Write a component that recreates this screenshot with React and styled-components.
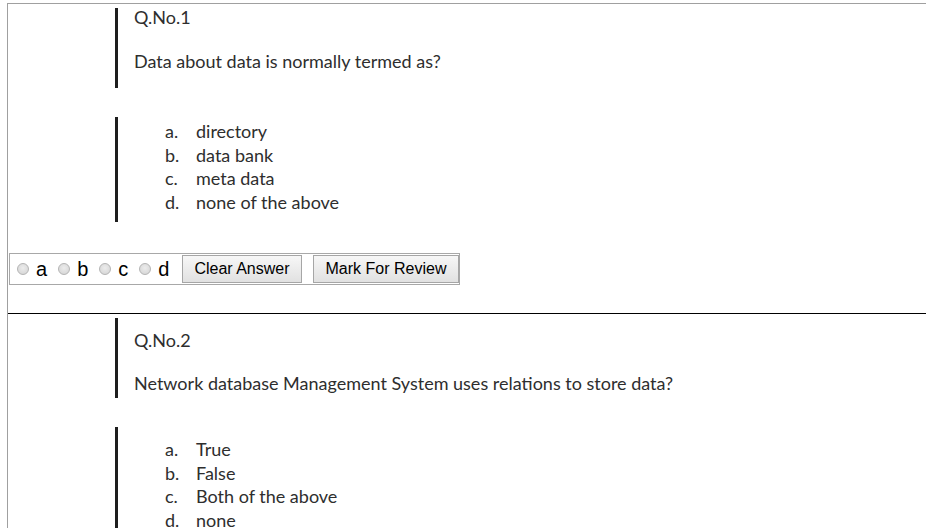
import React from "react";
import styled, { createGlobalStyle } from "styled-components";

const questions = [
  {
    no: 1,
    text: "Data about data is normally termed as?",
    options: ["directory", "data bank", "meta data", "none of the above"],
    stemTop: 0,
    textGap: 25,
    optionsTop: 3,
  },
  {
    no: 2,
    text: "Network database Management System uses relations to store data?",
    options: ["True", "False", "Both of the above", "none"],
    stemTop: 13,
    textGap: 24,
    optionsTop: 11,
  },
];

const letters = ["a", "b", "c", "d"];

export default function App() {
  return (
    <>
      <GlobalStyle />
      <Page>
        <Sheet>
          {questions.map((q, i) => (
            <QuestionBlock key={q.no} first={i === 0}>
              <Stem top={q.stemTop}>
                <QNo>Q.No.{q.no}</QNo>
                <QText gap={q.textGap}>{q.text}</QText>
              </Stem>
              <Options top={q.optionsTop}>
                {q.options.map((opt, j) => (
                  <OptionRow key={opt}>
                    <OptionLetter>{letters[j]}.</OptionLetter>
                    <span>{opt}</span>
                  </OptionRow>
                ))}
              </Options>
              <AnswerBar>
                {letters.map((l) => (
                  <Choice key={l}>
                    <Radio type="radio" name={`q${q.no}`} value={l} />
                    {l}
                  </Choice>
                ))}
                <ActionButton type="button" pad={11}>
                  Clear Answer
                </ActionButton>
                <ActionButton type="button" pad={12}>
                  Mark For Review
                </ActionButton>
              </AnswerBar>
            </QuestionBlock>
          ))}
        </Sheet>
      </Page>
    </>
  );
}

const GlobalStyle = createGlobalStyle`
  html, body {
    margin: 0;
    background: #ffffff;
    overflow: hidden;
  }
`;

const Page = styled.div`
  padding: 3px 0 0 7px;
`;

const Sheet = styled.div`
  border-left: 1px solid #a0a0a0;
  border-top: 1px solid #a0a0a0;
`;

const QuestionBlock = styled.div`
  border-top: ${(p) => (p.first ? "none" : "1px solid #000")};
  padding: 4px 0 28px 0;
`;

const Stem = styled.div`
  margin-left: 107px;
  height: 80px;
  border-left: 3px solid #1e1e1e;
  padding: ${(p) => p.top}px 0 0 16px;
  box-sizing: border-box;
  font-family: Lato, "Open Sans", sans-serif;
  font-size: 18px;
  color: #2e2e2e;
`;

const QNo = styled.div`
  line-height: 18px;
`;

const QText = styled.div`
  line-height: 20px;
  margin-top: ${(p) => p.gap}px;
`;

const Options = styled.ul`
  list-style: none;
  margin: 29px 0 0 107px;
  height: 105px;
  box-sizing: border-box;
  border-left: 3px solid #1e1e1e;
  padding: ${(p) => p.top}px 0 0 47px;
  font-family: Lato, "Open Sans", sans-serif;
  font-size: 18px;
  color: #2e2e2e;
`;

const OptionRow = styled.li`
  display: flex;
  line-height: 23.5px;
`;

const OptionLetter = styled.span`
  width: 31px;
`;

const AnswerBar = styled.div`
  display: inline-flex;
  align-items: center;
  margin: 31px 0 0 1px;
  padding: 1px 0 1px 7px;
  border: 1px solid #a8a8a8;
  font-family: Arial, "Liberation Sans", sans-serif;
`;

const Choice = styled.label`
  display: flex;
  align-items: center;
  gap: 7px;
  margin-right: 11px;
  font-size: 20px;
  line-height: 28px;
  color: #000;
`;

const Radio = styled.input`
  appearance: none;
  margin: 0;
  width: 12px;
  height: 12px;
  border-radius: 50%;
  border: 1px solid #b4b4b4;
  box-sizing: border-box;
  background: radial-gradient(circle at 50% 40%, #ececec 0%, #d2d2d2 100%);
`;

const ActionButton = styled.button`
  height: 28px;
  padding: 0 ${(p) => p.pad}px;
  margin-left: 2px;
  margin-right: 9px;
  border: 1px solid #a6a6a6;
  border-radius: 0;
  background: linear-gradient(#f7f7f7, #e1e1e1);
  font-family: Arial, "Liberation Sans", sans-serif;
  font-size: 16px;
  color: #000;
  &:last-child {
    margin-right: 0;
  }
`;
